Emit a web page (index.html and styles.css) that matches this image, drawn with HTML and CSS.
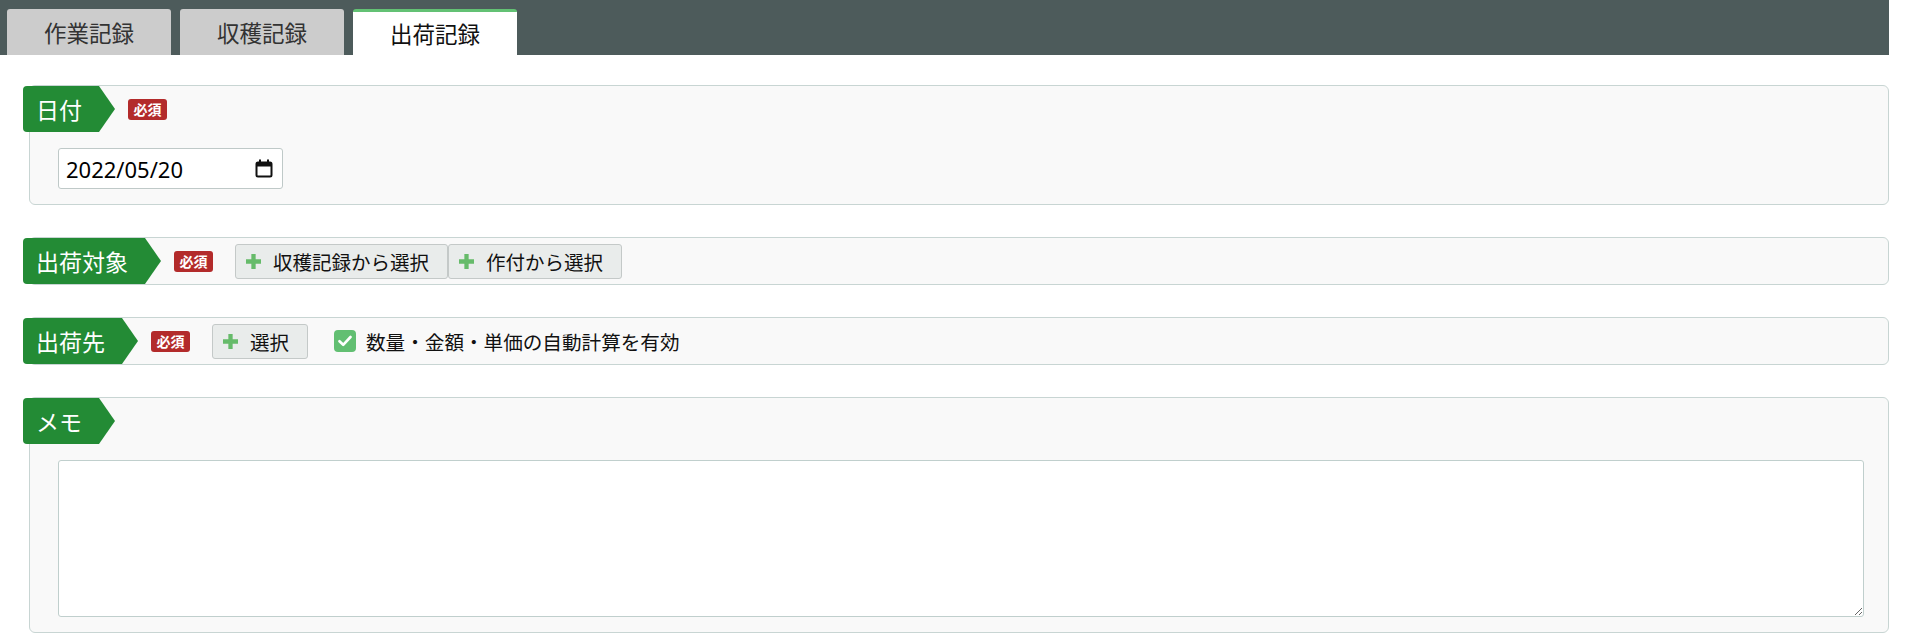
FILE: index.html
```html
<!DOCTYPE html>
<html lang="ja">
<head>
    <meta charset="UTF-8">
    <meta name="viewport" content="width=device-width, initial-scale=1.0">
    <title>出荷記録</title>
    <link rel="stylesheet" href="styles.css">
</head>
<body>
    <nav class="tabs">
        <a class="tab" href="#sagyo">作業記録</a>
        <a class="tab" href="#shukaku">収穫記録</a>
        <a class="tab active" href="#shukka">出荷記録</a>
    </nav>

    <main class="form">
        <section class="card">
            <div class="card-head">
                <h2 class="label">日付</h2>
                <span class="hissu">必須</span>
            </div>
            <div class="card-body">
                <label class="date-input">
                    <input type="text" value="2022/05/20">
                    <svg width="18" height="19" viewBox="0 0 18 19">
                        <rect x="1.5" y="3.5" width="15" height="14" rx="1.5" fill="none" stroke="#111" stroke-width="2"/>
                        <rect x="1.5" y="3.5" width="15" height="4" fill="#111"/>
                        <rect x="4" y="0.5" width="2" height="4" fill="#111"/>
                        <rect x="12" y="0.5" width="2" height="4" fill="#111"/>
                    </svg>
                </label>
            </div>
        </section>

        <section class="card">
            <div class="card-head">
                <h2 class="label">出荷対象</h2>
                <span class="hissu">必須</span>
                <div class="btn-group">
                    <button class="btn"><svg class="plus" viewBox="0 0 14 14"><path d="M5 0h4v5h5v4H9v5H5V9H0V5h5z"/></svg>収穫記録から選択</button>
                    <button class="btn"><svg class="plus" viewBox="0 0 14 14"><path d="M5 0h4v5h5v4H9v5H5V9H0V5h5z"/></svg>作付から選択</button>
                </div>
            </div>
        </section>

        <section class="card">
            <div class="card-head">
                <h2 class="label">出荷先</h2>
                <span class="hissu">必須</span>
                <div class="btn-group">
                    <button class="btn"><svg class="plus" viewBox="0 0 14 14"><path d="M5 0h4v5h5v4H9v5H5V9H0V5h5z"/></svg>選択</button>
                </div>
                <label class="check">
                    <span class="check-box">
                        <svg width="14" height="12" viewBox="0 0 14 12"><path d="M1.5 6.2l3.7 3.6L12.5 2" fill="none" stroke="#fff" stroke-width="2.6" stroke-linecap="round" stroke-linejoin="round"/></svg>
                    </span>
                    数量・金額・単価の自動計算を有効
                </label>
            </div>
        </section>

        <section class="card">
            <div class="card-head">
                <h2 class="label">メモ</h2>
            </div>
            <div class="card-body">
                <textarea class="memo"></textarea>
            </div>
        </section>
    </main>
</body>
</html>
```

FILE: styles.css
```css
body {
    margin: 0 16px 0 0;
    font-family: "Noto Sans CJK JP", "Noto Sans", sans-serif;
    color: #222;
    background-color: #fff;
}
.tabs {
    background-color: #4d5b5b;
    height: 55px;
    box-sizing: border-box;
    padding: 9px 0 0 7px;
    display: flex;
    gap: 9px;
}
.tab {
    width: 164px;
    height: 46px;
    box-sizing: border-box;
    background-color: #cccccc;
    border-radius: 3px 3px 0 0;
    color: #333;
    text-decoration: none;
    font-size: 22.5px;
    line-height: 46px;
    text-align: center;
}
.tab.active {
    background-color: #fff;
    color: #111;
    border-top: 3px solid #63c174;
    line-height: 42px;
}
.form {
    padding: 30px 0 20px 29px;
    display: flex;
    flex-direction: column;
    gap: 32px;
}
.card {
    background-color: #f9f9f9;
    border: 1px solid #c8d5d3;
    border-radius: 6px;
}
.card-head {
    display: flex;
    align-items: center;
    height: 46px;
}
.label {
    margin: 0 0 0 -7px;
    height: 46px;
    box-sizing: border-box;
    padding: 0 33px 0 13px;
    background-color: #238b35;
    color: #fff;
    font-size: 23px;
    font-weight: normal;
    line-height: 46px;
    border-radius: 4px 0 0 4px;
    clip-path: polygon(0 0, calc(100% - 16px) 0, 100% 50%, calc(100% - 16px) 100%, 0 100%);
}
.hissu {
    margin-left: 13px;
    width: 39px;
    height: 21px;
    background-color: #b32b2b;
    color: #fff;
    border-radius: 3px;
    font-size: 14px;
    font-weight: bold;
    line-height: 21px;
    text-align: center;
}
.btn-group {
    display: flex;
    margin-left: 22px;
}
.btn {
    display: flex;
    align-items: center;
    height: 35px;
    padding: 0 18px 0 10px;
    background-color: #e9eceb;
    border: 1px solid #c4c9c8;
    border-radius: 3px;
    font-family: inherit;
    font-size: 19.5px;
    color: #111;
    cursor: pointer;
}
.plus {
    width: 15px;
    height: 15px;
    margin-right: 12px;
    fill: #66bb6a;
}
.check {
    display: flex;
    align-items: center;
    margin-left: 26px;
    font-size: 19.6px;
    color: #111;
}
.check-box {
    width: 22px;
    height: 22px;
    margin-right: 10px;
    border-radius: 4px;
    background-color: #62bf72;
    display: flex;
    align-items: center;
    justify-content: center;
}
.card-body {
    padding: 16px 24px 15px 28px;
}
.date-input {
    display: flex;
    align-items: center;
    width: 225px;
    height: 41px;
    box-sizing: border-box;
    padding: 0 9px 0 7px;
    background-color: #fff;
    border: 1px solid #bfc9c8;
    border-radius: 3px;
}
.date-input input {
    flex: 1;
    min-width: 0;
    border: none;
    outline: none;
    padding: 0;
    font-family: "Noto Sans", sans-serif;
    font-size: 22px;
    color: #000;
}
.memo {
    display: block;
    width: 100%;
    height: 157px;
    box-sizing: border-box;
    border: 1px solid #c0cfcd;
    border-radius: 3px;
    background-color: #fff;
}
```
